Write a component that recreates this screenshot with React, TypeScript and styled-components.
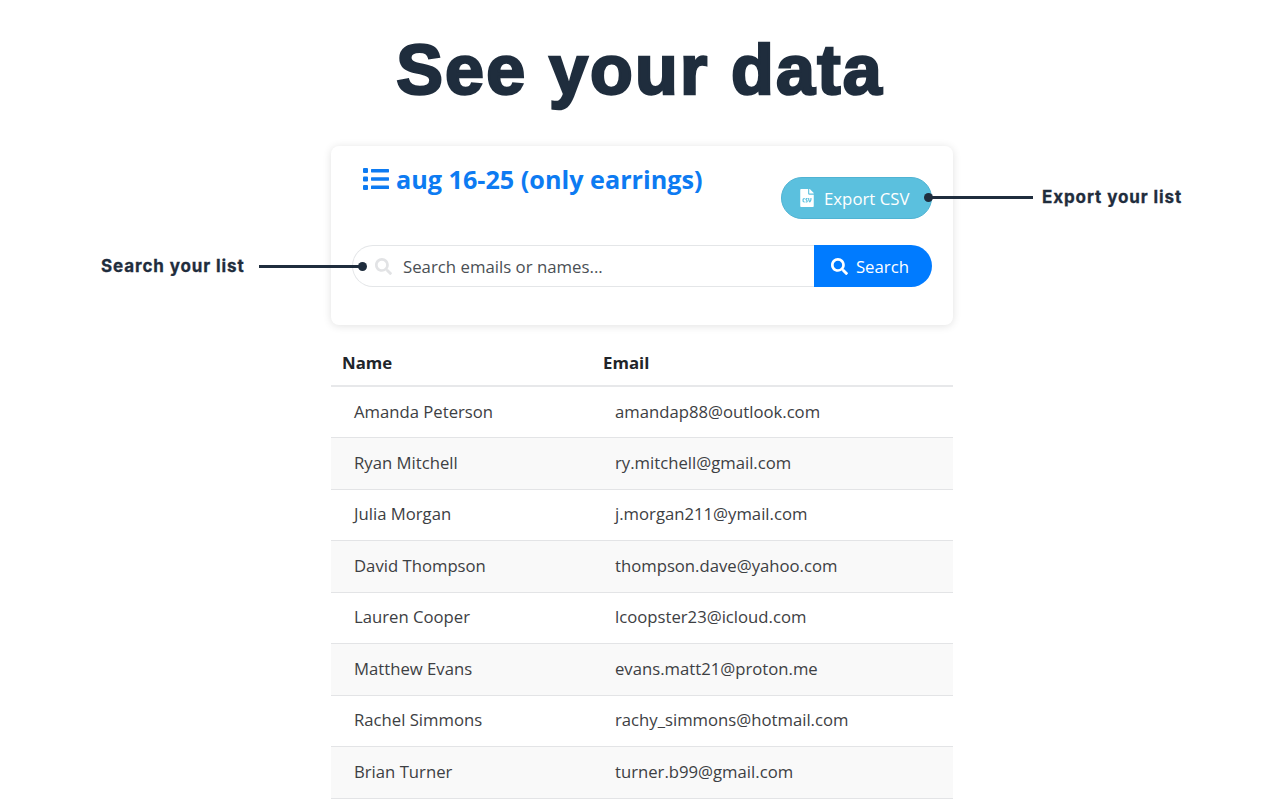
import styled, { createGlobalStyle } from "styled-components";
import { FaFileCsv, FaSearch } from "react-icons/fa";

const GlobalStyle = createGlobalStyle`
  html, body {
    margin: 0;
    padding: 0;
    background: #fff;
    overflow: hidden;
  }
`;

const Page = styled.div`
  position: relative;
  width: 1280px;
  height: 800px;
  overflow: hidden;
  display: flex;
  flex-direction: column;
  align-items: center;
  font-family: "Open Sans", "Liberation Sans", sans-serif;
  & > * {
    flex-shrink: 0;
  }
`;

const Heading = styled.h1`
  margin: 0;
  height: 146px;
  padding-top: 27px;
  box-sizing: border-box;
  font-family: "Liberation Sans", Arial, sans-serif;
  font-size: 70px;
  line-height: 86px;
  font-weight: 700;
  letter-spacing: 2.2px;
  color: #1f2d3d;
  -webkit-text-stroke: 2.5px #1f2d3d;
`;

const Card = styled.section`
  position: relative;
  width: 622px;
  height: 179px;
  margin-left: 4px;
  box-sizing: border-box;
  padding: 15px 21px 0 21px;
  background: #fff;
  border-radius: 8px;
  box-shadow: 0 1px 8px rgba(0, 0, 0, 0.12);
`;

const CardTop = styled.div`
  display: flex;
  justify-content: space-between;
  align-items: flex-start;
  height: 84px;
`;

const CardTitle = styled.h2`
  margin: 0 0 0 11px;
  display: flex;
  align-items: center;
  gap: 7px;
  font-size: 25.2px;
  line-height: 36px;
  font-weight: 700;
  color: #0d7bf2;
`;

const ListIcon = styled.svg`
  width: 26px;
  height: 22px;
  fill: #0d7bf2;
`;

const ExportButton = styled.button`
  margin-top: 16px;
  width: 151px;
  height: 42px;
  display: flex;
  align-items: center;
  gap: 8px;
  padding: 0 0 0 16px;
  border: 1px solid #4fb3d3;
  border-radius: 21px;
  background: #5bc0de;
  color: #fff;
  font-family: inherit;
  font-size: 16.8px;
`;

const SearchRow = styled.div`
  display: flex;
  height: 42px;
`;

const SearchField = styled.div`
  flex: 1;
  display: flex;
  align-items: center;
  gap: 11px;
  box-sizing: border-box;
  padding-left: 22px;
  border: 1px solid #e4e6e8;
  border-right: none;
  border-radius: 21px 0 0 21px;
  font-size: 16.8px;
  color: #4a4f54;
`;

const SearchButton = styled.button`
  width: 118px;
  display: flex;
  align-items: center;
  justify-content: center;
  gap: 8px;
  padding: 0 6px 0 0;
  border: none;
  border-radius: 0 21px 21px 0;
  background: #007bff;
  color: #fff;
  font-family: inherit;
  font-size: 16.8px;
`;

const Table = styled.table`
  width: 622px;
  margin: 20px 0 0 4px;
  border-collapse: collapse;
  table-layout: fixed;
  color: #3d4043;
  font-size: 16.7px;
`;

const HeadCell = styled.th`
  height: 35px;
  padding: 0 0 5px 11px;
  border-bottom: 2px solid #e7e8ea;
  text-align: left;
  font-size: 16.8px;
  font-weight: 700;
  color: #212529;
`;

const Row = styled.tr<{ $striped: boolean }>`
  height: 51.5px;
  background: ${(p) => (p.$striped ? "#f9f9f9" : "#fff")};
`;

const Cell = styled.td`
  padding: 0 0 2px 23px;
  border-bottom: 1px solid #e3e4e6;
`;

const Callout = styled.div<{ $top: number; $left: number }>`
  position: absolute;
  top: ${(p) => p.$top}px;
  left: ${(p) => p.$left}px;
  display: flex;
  align-items: center;
`;

const CalloutLabel = styled.span`
  font-family: "Inter", "Liberation Sans", sans-serif;
  font-size: 17px;
  line-height: 24px;
  font-weight: 700;
  letter-spacing: 0.9px;
  color: #1f2d3d;
  -webkit-text-stroke: 0.3px #1f2d3d;
  white-space: nowrap;
`;

const CalloutLine = styled.span<{ $width: number; $gap: number; $dotSide: "left" | "right" }>`
  position: relative;
  display: block;
  width: ${(p) => p.$width}px;
  height: 3px;
  margin: ${(p) => (p.$dotSide === "right" ? `0 0 0 ${p.$gap}px` : `0 ${p.$gap}px 0 0`)};
  background: #1f2d3d;

  &::after {
    content: "";
    position: absolute;
    top: -3px;
    ${(p) => p.$dotSide}: -4px;
    width: 9px;
    height: 9px;
    border-radius: 50%;
    background: #1f2d3d;
  }
`;

const people = [
  ["Amanda Peterson", "amandap88@outlook.com"],
  ["Ryan Mitchell", "ry.mitchell@gmail.com"],
  ["Julia Morgan", "j.morgan211@ymail.com"],
  ["David Thompson", "thompson.dave@yahoo.com"],
  ["Lauren Cooper", "lcoopster23@icloud.com"],
  ["Matthew Evans", "evans.matt21@proton.me"],
  ["Rachel Simmons", "rachy_simmons@hotmail.com"],
  ["Brian Turner", "turner.b99@gmail.com"],
];

const App = () => {
  return (
    <Page>
      <GlobalStyle />
      <Heading>See your data</Heading>
      <Card>
        <CardTop>
          <CardTitle>
            <ListIcon viewBox="0 0 26 22">
              <rect x="0" y="0" width="5" height="5" rx="1" />
              <rect x="0" y="8.5" width="5" height="5" rx="1" />
              <rect x="0" y="17" width="5" height="5" rx="1" />
              <rect x="8" y="1" width="18" height="3.4" rx="0.6" />
              <rect x="8" y="9.3" width="18" height="3.4" rx="0.6" />
              <rect x="8" y="17.6" width="18" height="3.4" rx="0.6" />
            </ListIcon>
            aug 16-25 (only earrings)
          </CardTitle>
          <ExportButton>
            <FaFileCsv size={18} />
            Export CSV
          </ExportButton>
        </CardTop>
        <SearchRow>
          <SearchField>
            <FaSearch size={17} color="#e2e3e5" />
            Search emails or names...
          </SearchField>
          <SearchButton>
            <FaSearch size={17} />
            Search
          </SearchButton>
        </SearchRow>
      </Card>
      <Table>
        <colgroup>
          <col width={261} />
          <col />
        </colgroup>
        <thead>
          <tr>
            <HeadCell>Name</HeadCell>
            <HeadCell>Email</HeadCell>
          </tr>
        </thead>
        <tbody>
          {people.map(([name, email], i) => (
            <Row key={email} $striped={i % 2 === 1}>
              <Cell>{name}</Cell>
              <Cell>{email}</Cell>
            </Row>
          ))}
        </tbody>
      </Table>
      <Callout $top={254} $left={101}>
        <CalloutLabel>Search your list</CalloutLabel>
        <CalloutLine $width={104} $gap={14} $dotSide="right" />
      </Callout>
      <Callout $top={185} $left={928}>
        <CalloutLine $width={105} $gap={9} $dotSide="left" />
        <CalloutLabel>Export your list</CalloutLabel>
      </Callout>
    </Page>
  );
};

export default App;
